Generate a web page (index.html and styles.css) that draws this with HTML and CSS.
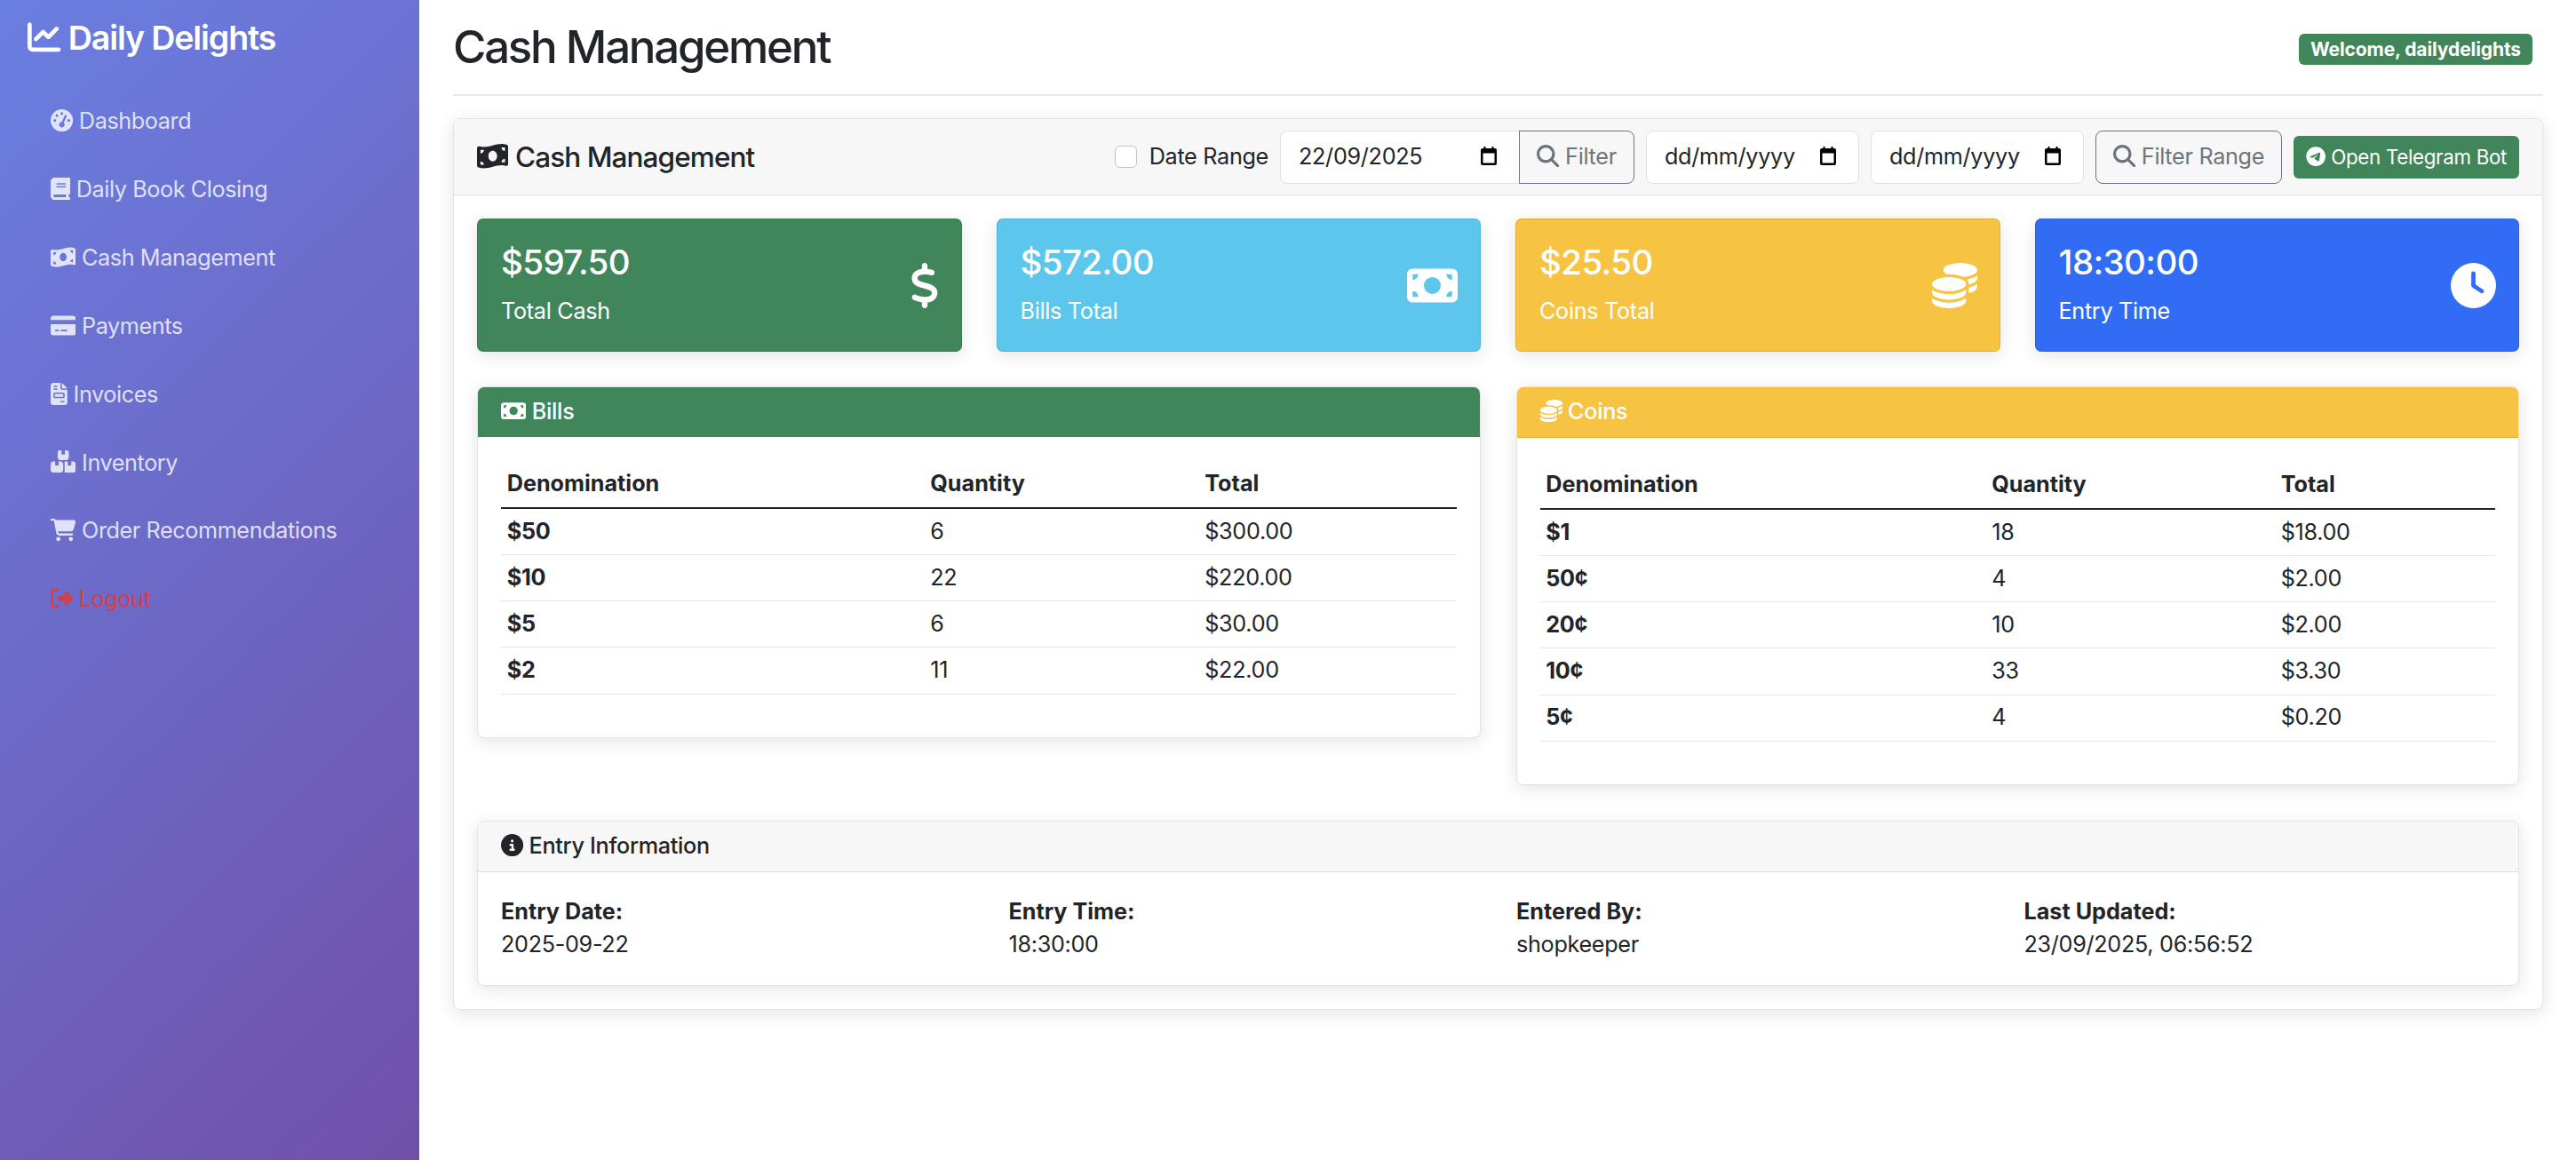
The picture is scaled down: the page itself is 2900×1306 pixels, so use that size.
FILE: index.html
```html
<!DOCTYPE html>
<html lang="en">
<head>
    <meta charset="UTF-8">
    <meta name="viewport" content="width=device-width, initial-scale=1.0">
    <title>Cash Management</title>
    <link rel="stylesheet" href="styles.css">
</head>
<body>
    <svg class="icon-defs" aria-hidden="true">
        <symbol id="i-chart" viewBox="0 0 512 512"><path d="M64 64c0-17.7-14.3-32-32-32S0 46.3 0 64V400c0 44.2 35.8 80 80 80H480c17.7 0 32-14.3 32-32s-14.3-32-32-32H80c-8.8 0-16-7.2-16-16V64zm406.6 86.6c12.5-12.5 12.5-32.8 0-45.3s-32.8-12.5-45.3 0L320 210.7l-57.4-57.4c-12.5-12.5-32.8-12.5-45.3 0l-112 112c-12.5 12.5-12.5 32.8 0 45.3s32.8 12.5 45.3 0L240 221.3l57.4 57.4c12.5 12.5 32.8 12.5 45.3 0l128-128z"/></symbol>
        <symbol id="i-gauge" viewBox="0 0 512 512"><path d="M0 256a256 256 0 1 1 512 0A256 256 0 1 1 0 256zM288 96a32 32 0 1 0 -64 0 32 32 0 1 0 64 0zM256 416c35.3 0 64-28.7 64-64c0-17.4-6.9-33.1-18.1-44.6L366 161.7c5.3-12.1-.2-26.3-12.3-31.6s-26.3 .2-31.6 12.3L257.9 288c-.6 0-1.3 0-1.9 0c-35.3 0-64 28.7-64 64s28.7 64 64 64zM176 144a32 32 0 1 0 -64 0 32 32 0 1 0 64 0zM96 288a32 32 0 1 0 0-64 32 32 0 1 0 0 64zm352-32a32 32 0 1 0 -64 0 32 32 0 1 0 64 0z"/></symbol>
        <symbol id="i-book" viewBox="0 0 448 512"><path d="M96 0C43 0 0 43 0 96V416c0 53 43 96 96 96H384h32c17.7 0 32-14.3 32-32s-14.3-32-32-32V384c17.7 0 32-14.3 32-32V32c0-17.7-14.3-32-32-32H384 96zm0 384H352v64H96c-17.7 0-32-14.3-32-32s14.3-32 32-32zm32-240c0-8.8 7.2-16 16-16H336c8.8 0 16 7.2 16 16s-7.2 16-16 16H144c-8.8 0-16-7.2-16-16zm16 48H336c8.8 0 16 7.2 16 16s-7.2 16-16 16H144c-8.8 0-16-7.2-16-16s7.2-16 16-16z"/></symbol>
        <symbol id="i-wave" viewBox="0 0 576 512"><path d="M0 112.5V422.3c0 18 10.1 35 27 41.3c87 32.5 174 10.3 261-11.9c79.8-20.3 159.6-40.7 239.3-18.9c23 6.3 48.7-9.5 48.7-33.4V89.7c0-18-10.1-35-27-41.3C462 15.9 375 38.1 288 60.3C208.2 80.6 128.4 100.9 48.7 79.1C25.6 72.8 0 88.6 0 112.5zM288 352c-44.2 0-80-43-80-96s35.8-96 80-96s80 43 80 96s-35.8 96-80 96zM64 352c35.3 0 64 28.7 64 64H64V352zm64-208c0 35.3-28.7 64-64 64V144h64zM512 304v64H448c0-35.3 28.7-64 64-64zM448 96h64v64c-35.3 0-64-28.7-64-64z"/></symbol>
        <symbol id="i-card" viewBox="0 0 576 512"><path d="M64 32C28.7 32 0 60.7 0 96v32H576V96c0-35.3-28.7-64-64-64H64zM576 224H0V416c0 35.3 28.7 64 64 64H512c35.3 0 64-28.7 64-64V224zM112 352h64c8.8 0 16 7.2 16 16s-7.2 16-16 16H112c-8.8 0-16-7.2-16-16s7.2-16 16-16zm112 16c0-8.8 7.2-16 16-16H368c8.8 0 16 7.2 16 16s-7.2 16-16 16H240c-8.8 0-16-7.2-16-16z"/></symbol>
        <symbol id="i-invoice" viewBox="0 0 384 512"><path d="M64 0C28.7 0 0 28.7 0 64V448c0 35.3 28.7 64 64 64H320c35.3 0 64-28.7 64-64V160H256c-17.7 0-32-14.3-32-32V0H64zM256 0V128H384L256 0zM80 64h64c8.8 0 16 7.2 16 16s-7.2 16-16 16H80c-8.8 0-16-7.2-16-16s7.2-16 16-16zm0 64h64c8.8 0 16 7.2 16 16s-7.2 16-16 16H80c-8.8 0-16-7.2-16-16s7.2-16 16-16zm16 96H288c17.7 0 32 14.3 32 32v64c0 17.7-14.3 32-32 32H96c-17.7 0-32-14.3-32-32V256c0-17.7 14.3-32 32-32zm0 32v64H288V256H96zM240 416h64c8.8 0 16 7.2 16 16s-7.2 16-16 16H240c-8.8 0-16-7.2-16-16s7.2-16 16-16z"/></symbol>
        <symbol id="i-boxes" viewBox="0 0 576 512"><path d="M248 0H208c-26.5 0-48 21.5-48 48V160c0 35.3 28.7 64 64 64H352c35.3 0 64-28.7 64-64V48c0-26.5-21.5-48-48-48H328V80c0 8.8-7.2 16-16 16H264c-8.8 0-16-7.2-16-16V0zM64 256c-35.3 0-64 28.7-64 64V448c0 35.3 28.7 64 64 64H224c35.3 0 64-28.7 64-64V320c0-35.3-28.7-64-64-64H184v80c0 8.8-7.2 16-16 16H120c-8.8 0-16-7.2-16-16V256H64zM352 512H512c35.3 0 64-28.7 64-64V320c0-35.3-28.7-64-64-64H472v80c0 8.8-7.2 16-16 16H408c-8.8 0-16-7.2-16-16V256H352c-15 0-28.8 5.1-39.7 13.8c4.9 10.4 7.7 22 7.7 34.2V464c0 12.2-2.8 23.8-7.7 34.2C323.2 506.9 337 512 352 512z"/></symbol>
        <symbol id="i-cart" viewBox="0 0 576 512"><path d="M0 24C0 10.7 10.7 0 24 0H69.5c22 0 41.5 12.8 50.6 32h411c26.3 0 45.5 25 38.6 50.4l-41 152.3c-8.5 31.4-37 53.3-69.5 53.3H170.7l5.4 28.5c2.2 11.3 12.1 19.5 23.6 19.5H488c13.3 0 24 10.7 24 24s-10.7 24-24 24H199.7c-34.6 0-64.3-24.6-70.7-58.5L77.4 54.5c-.7-3.8-4-6.5-7.9-6.5H24C10.7 48 0 37.3 0 24zM128 464a48 48 0 1 1 96 0 48 48 0 1 1 -96 0zm336-48a48 48 0 1 1 0 96 48 48 0 1 1 0-96z"/></symbol>
        <symbol id="i-logout" viewBox="0 0 512 512"><path d="M377.9 105.9L500.7 228.7c7.2 7.2 11.3 17.1 11.3 27.3s-4.1 20.1-11.3 27.3L377.9 406.1c-6.4 6.4-15 9.9-24 9.9c-18.7 0-33.9-15.2-33.9-33.9l0-62.1-128 0c-17.7 0-32-14.3-32-32l0-64c0-17.7 14.3-32 32-32l128 0 0-62.1c0-18.7 15.2-33.9 33.9-33.9c9 0 17.6 3.6 24 9.9zM160 96L96 96c-17.7 0-32 14.3-32 32l0 256c0 17.7 14.3 32 32 32l64 0c17.7 0 32 14.3 32 32s-14.3 32-32 32l-64 0c-53 0-96-43-96-96L0 128C0 75 43 32 96 32l64 0c17.7 0 32 14.3 32 32s-14.3 32-32 32z"/></symbol>
        <symbol id="i-search" viewBox="0 0 512 512"><path d="M416 208c0 45.9-14.9 88.3-40 122.7L502.6 457.4c12.5 12.5 12.5 32.8 0 45.3s-32.8 12.5-45.3 0L330.7 376c-34.4 25.2-76.8 40-122.7 40C93.1 416 0 322.9 0 208S93.1 0 208 0S416 93.1 416 208zM208 352a144 144 0 1 0 0-288 144 144 0 1 0 0 288z"/></symbol>
        <symbol id="i-dollar" viewBox="0 0 320 512"><path d="M160 0c17.7 0 32 14.3 32 32V67.7c1.6 .2 3.1 .4 4.7 .7c.4 .1 .7 .1 1.1 .2l48 8.8c17.4 3.2 28.9 19.9 25.7 37.2s-19.9 28.9-37.2 25.7l-47.5-8.7c-31.3-4.6-58.9-1.5-78.3 6.2s-27.2 18.3-29 28.1c-2 10.7-.5 16.7 1.2 20.4c1.8 3.9 5.5 8.3 12.8 13.2c16.3 10.7 41.3 17.7 73.7 26.3l2.9 .8c28.6 7.6 63.6 16.8 89.6 33.8c14.2 9.3 27.6 21.9 35.9 39.5c8.5 17.9 10.3 37.9 6.4 59.2c-6.9 38-33.1 63.4-65.6 76.7c-13.7 5.6-28.6 9.2-44.4 11V480c0 17.7-14.3 32-32 32s-32-14.3-32-32V445.1c-.4-.1-.9-.1-1.3-.2l-.2 0 0 0c-24.4-3.8-64.5-14.3-91.5-26.3c-16.1-7.2-23.4-26.1-16.2-42.2s26.1-23.4 42.2-16.2c20.9 9.3 55.3 18.5 75.2 21.6c31.9 4.7 58.2 2 76-5.3c16.9-6.9 24.6-16.9 26.8-28.9c1.9-10.6 .4-16.7-1.3-20.4c-1.9-4-5.6-8.4-13-13.3c-16.4-10.7-41.5-17.7-74-26.3l-2.8-.7 0 0C119.4 279.3 84.4 270 58.4 253c-14.2-9.3-27.5-22-35.8-39.6c-8.4-17.9-10.1-37.9-6.1-59.2C23.7 116 52.3 91.2 84.8 78.3c13.3-5.3 27.9-8.9 43.2-11V32c0-17.7 14.3-32 32-32z"/></symbol>
        <symbol id="i-bill" viewBox="0 0 576 512"><path d="M64 64C28.7 64 0 92.7 0 128V384c0 35.3 28.7 64 64 64H512c35.3 0 64-28.7 64-64V128c0-35.3-28.7-64-64-64H64zm64 320H64V320c35.3 0 64 28.7 64 64zM64 192V128h64c0 35.3-28.7 64-64 64zM448 384c0-35.3 28.7-64 64-64v64H448zm64-192c-35.3 0-64-28.7-64-64h64v64zM288 160a96 96 0 1 1 0 192 96 96 0 1 1 0-192z"/></symbol>
        <symbol id="i-coins" viewBox="0 0 512 512"><path d="M512 80c0 18-14.3 34.6-38.4 48c-29.1 16.1-72.5 27.5-122.3 30.9c-3.7-1.8-7.4-3.5-11.3-5C300.6 137.4 248.2 128 192 128c-8.3 0-16.4 .2-24.5 .6l-1.1-.6C142.3 114.6 128 98 128 80c0-44.2 86-80 192-80S512 35.8 512 80zM160.7 161.1c10.2-.7 20.7-1.1 31.3-1.1c62.2 0 117.4 12.3 152.5 31.4C369.3 204.9 384 221.7 384 240c0 4-.7 7.9-2.1 11.7c-4.6 13.2-17 25.3-35 35.5c0 0 0 0 0 0c-.1 .1-.3 .1-.4 .2l0 0 0 0c-.3 .2-.6 .3-.9 .5c-35 19.4-90.8 32-153.6 32c-59.6 0-112.9-11.3-148.2-29.1c-1.9-.9-3.7-1.9-5.5-2.9C14.3 274.6 0 258 0 240c0-34.8 53.4-64.5 128-75.4c10.5-1.5 21.4-2.7 32.7-3.5zM416 240c0-21.9-10.6-39.9-24.1-53.4c28.3-4.4 54.2-11.4 76.2-20.5c16.3-6.8 31.5-15.2 43.9-25.5V176c0 19.3-16.5 37.1-43.8 50.9c-14.6 7.4-32.4 13.7-52.4 18.5c.1-1.8 .2-3.5 .2-5.3zm-32 96c0 18-14.3 34.6-38.4 48c-1.8 1-3.6 1.9-5.5 2.9C304.9 404.7 251.6 416 192 416c-62.8 0-118.6-12.6-153.6-32C14.3 370.6 0 354 0 336V300.6c12.5 10.3 27.6 18.7 43.9 25.5C83.4 342.6 135.8 352 192 352s108.6-9.4 148.1-25.9c7.8-3.2 15.3-6.9 22.4-10.9c6.1-3.4 11.8-7.2 17.2-11.2c1.5-1.1 2.9-2.3 4.3-3.4V304v5.7V336zm32 0V304 278.1c19-4.2 36.5-9.5 52.1-16c16.3-6.8 31.5-15.2 43.9-25.5V272c0 10.5-5 21-14.9 30.9c-16.3 16.3-45 29.7-81.3 38.4c.1-1.7 .2-3.5 .2-5.3zM192 448c56.2 0 108.6-9.4 148.1-25.9c16.3-6.8 31.5-15.2 43.9-25.5V432c0 44.2-86 80-192 80S0 476.2 0 432V396.6c12.5 10.3 27.6 18.7 43.9 25.5C83.4 438.6 135.8 448 192 448z"/></symbol>
        <symbol id="i-clock" viewBox="0 0 512 512"><path d="M256 0a256 256 0 1 1 0 512A256 256 0 1 1 256 0zM232 120V256c0 8 4 15.5 10.7 20l96 64c11 7.4 25.9 4.4 33.3-6.7s4.4-25.9-6.7-33.3L280 243.2V120c0-13.3-10.7-24-24-24s-24 10.7-24 24z"/></symbol>
        <symbol id="i-telegram" viewBox="0 0 496 512"><path d="M248,8C111.033,8,0,119.033,0,256S111.033,504,248,504,496,392.967,496,256,384.967,8,248,8ZM362.952,176.66c-3.732,39.215-19.881,134.378-28.1,178.3-3.476,18.584-10.322,24.816-16.948,25.425-14.4,1.326-25.338-9.517-39.287-18.661-21.827-14.308-34.158-23.215-55.346-37.177-24.485-16.135-8.612-25,5.342-39.5,3.652-3.793,67.107-61.51,68.335-66.746.153-.655.3-3.1-1.154-4.384s-3.59-.849-5.135-.5q-3.283.746-104.608,69.142-14.845,10.194-26.894,9.934c-8.855-.191-25.888-5.006-38.551-9.123-15.531-5.048-27.875-7.717-26.8-16.291q.84-6.7,18.45-13.7,108.446-47.248,144.628-62.3c68.872-28.647,83.183-33.623,92.511-33.789,2.052-.034,6.639.474,9.61,2.885a10.452,10.452,0,0,1,3.53,6.716A43.765,43.765,0,0,1,362.952,176.66Z"/></symbol>
        <symbol id="i-info" viewBox="0 0 512 512"><path d="M256 512A256 256 0 1 0 256 0a256 256 0 1 0 0 512zM216 336h24V272H216c-13.3 0-24-10.7-24-24s10.7-24 24-24h48c13.3 0 24 10.7 24 24v88h8c13.3 0 24 10.7 24 24s-10.7 24-24 24H216c-13.3 0-24-10.7-24-24s10.7-24 24-24zm40-208a32 32 0 1 1 0 64 32 32 0 1 1 0-64z"/></symbol>
        <symbol id="i-calendar" viewBox="0 0 18 21"><path fill-rule="evenodd" d="M3.5 0h2v2h7V0h2v2H16a2 2 0 0 1 2 2v15a2 2 0 0 1-2 2H2a2 2 0 0 1-2-2V4a2 2 0 0 1 2-2h1.5zM2.5 7.5v11h13v-11z"/></symbol>
    </svg>

    <div class="app">
        <aside class="sidebar">
            <div class="brand"><svg class="icon"><use href="#i-chart"/></svg> Daily Delights</div>
            <nav class="side-nav">
                <a href="#"><svg class="icon"><use href="#i-gauge"/></svg> Dashboard</a>
                <a href="#"><svg class="icon w-448"><use href="#i-book"/></svg> Daily Book Closing</a>
                <a href="#"><svg class="icon w-576"><use href="#i-wave"/></svg> Cash Management</a>
                <a href="#"><svg class="icon w-576"><use href="#i-card"/></svg> Payments</a>
                <a href="#"><svg class="icon w-384"><use href="#i-invoice"/></svg> Invoices</a>
                <a href="#"><svg class="icon w-576"><use href="#i-boxes"/></svg> Inventory</a>
                <a href="#"><svg class="icon w-576"><use href="#i-cart"/></svg> Order Recommendations</a>
                <a href="#" class="logout"><svg class="icon"><use href="#i-logout"/></svg> Logout</a>
            </nav>
        </aside>

        <main class="content">
            <header class="page-header">
                <h1>Cash Management</h1>
                <span class="welcome">Welcome, dailydelights</span>
            </header>

            <section class="card main-card">
                <div class="card-header toolbar">
                    <h2><svg class="icon w-576"><use href="#i-wave"/></svg> Cash Management</h2>
                    <div class="filters">
                        <label class="range-check"><input type="checkbox"> Date Range</label>
                        <div class="input-group">
                            <div class="date-field date-single"><span>22/09/2025</span><svg class="cal"><use href="#i-calendar"/></svg></div>
                            <button class="btn-outline btn-filter"><svg class="icon"><use href="#i-search"/></svg> Filter</button>
                        </div>
                        <div class="date-field"><span>dd/mm/yyyy</span><svg class="cal"><use href="#i-calendar"/></svg></div>
                        <div class="date-field"><span>dd/mm/yyyy</span><svg class="cal"><use href="#i-calendar"/></svg></div>
                        <button class="btn-outline btn-range"><svg class="icon"><use href="#i-search"/></svg> Filter Range</button>
                        <button class="btn-telegram"><svg class="icon"><use href="#i-telegram"/></svg> Open Telegram Bot</button>
                    </div>
                </div>

                <div class="main-body">
                    <div class="stats">
                        <div class="stat bg-green">
                            <div><h3>$597.50</h3><p>Total Cash</p></div>
                            <svg class="stat-icon w-320"><use href="#i-dollar"/></svg>
                        </div>
                        <div class="stat bg-cyan">
                            <div><h3>$572.00</h3><p>Bills Total</p></div>
                            <svg class="stat-icon w-576"><use href="#i-bill"/></svg>
                        </div>
                        <div class="stat bg-yellow">
                            <div><h3>$25.50</h3><p>Coins Total</p></div>
                            <svg class="stat-icon"><use href="#i-coins"/></svg>
                        </div>
                        <div class="stat bg-blue">
                            <div><h3>18:30:00</h3><p>Entry Time</p></div>
                            <svg class="stat-icon"><use href="#i-clock"/></svg>
                        </div>
                    </div>

                    <div class="tables">
                        <div class="card">
                            <div class="card-header head-green"><svg class="icon w-576"><use href="#i-bill"/></svg> Bills</div>
                            <div class="table-wrap">
                                <table class="bills-table">
                                    <thead><tr><th>Denomination</th><th>Quantity</th><th>Total</th></tr></thead>
                                    <tbody>
                                        <tr><td>$50</td><td>6</td><td>$300.00</td></tr>
                                        <tr><td>$10</td><td>22</td><td>$220.00</td></tr>
                                        <tr><td>$5</td><td>6</td><td>$30.00</td></tr>
                                        <tr><td>$2</td><td>11</td><td>$22.00</td></tr>
                                    </tbody>
                                </table>
                            </div>
                        </div>
                        <div class="card">
                            <div class="card-header head-yellow"><svg class="icon"><use href="#i-coins"/></svg> Coins</div>
                            <div class="table-wrap">
                                <table class="coins-table">
                                    <thead><tr><th>Denomination</th><th>Quantity</th><th>Total</th></tr></thead>
                                    <tbody>
                                        <tr><td>$1</td><td>18</td><td>$18.00</td></tr>
                                        <tr><td>50¢</td><td>4</td><td>$2.00</td></tr>
                                        <tr><td>20¢</td><td>10</td><td>$2.00</td></tr>
                                        <tr><td>10¢</td><td>33</td><td>$3.30</td></tr>
                                        <tr><td>5¢</td><td>4</td><td>$0.20</td></tr>
                                    </tbody>
                                </table>
                            </div>
                        </div>
                    </div>

                    <div class="card">
                        <div class="card-header head-plain"><svg class="icon"><use href="#i-info"/></svg> Entry Information</div>
                        <div class="entry-grid">
                            <div><strong>Entry Date:</strong><span>2025-09-22</span></div>
                            <div><strong>Entry Time:</strong><span>18:30:00</span></div>
                            <div><strong>Entered By:</strong><span>shopkeeper</span></div>
                            <div><strong>Last Updated:</strong><span>23/09/2025, 06:56:52</span></div>
                        </div>
                    </div>
                </div>
            </section>
        </main>
    </div>
</body>
</html>
```

FILE: styles.css
```css
* {
    box-sizing: border-box;
}
body {
    margin: 0;
    font-family: Inter, "Liberation Sans", sans-serif;
    font-size: 25.2px;
    line-height: 1.5;
    letter-spacing: -0.3px;
    color: #212529;
    background: #fff;
}
.icon-defs {
    position: absolute;
    width: 0;
    height: 0;
}
.icon {
    width: 1em;
    height: 1em;
    fill: currentColor;
    vertical-align: -0.125em;
}
.w-320 { width: 0.625em; }
.w-384 { width: 0.75em; }
.w-448 { width: 0.875em; }
.w-576 { width: 1.125em; }

.app {
    display: flex;
    min-height: 1306px;
}

/* sidebar */
.sidebar {
    width: 472px;
    flex-shrink: 0;
    background: linear-gradient(135deg, #6a7fe1 0%, #7050a9 100%);
    color: #fff;
}
.brand {
    padding: 16px 31px;
    font-size: 37.5px;
    line-height: 54px;
    font-weight: 600;
    letter-spacing: -1.1px;
}
.side-nav {
    margin-top: 12.5px;
    display: flex;
    flex-direction: column;
    letter-spacing: -0.4px;
}
.side-nav a {
    padding: 19.55px 57px;
    color: rgba(255, 255, 255, 0.8);
    text-decoration: none;
}
.side-nav a.logout {
    color: #d43f4c;
}

/* content */
.content {
    flex: 1;
    min-width: 0;
    padding: 0 37px 0 38px;
}
.page-header {
    height: 108px;
    display: flex;
    align-items: center;
    justify-content: space-between;
    border-bottom: 2px solid #e9e9ea;
    padding-right: 12px;
    margin-bottom: 25px;
}
.page-header h1 {
    margin: 0;
    font-size: 51px;
    font-weight: 500;
    line-height: 1.2;
    letter-spacing: -2.25px;
}
.welcome {
    background: #41865a;
    color: #fff;
    font-size: 21px;
    font-weight: 700;
    line-height: 1;
    margin-top: 4px;
    padding: 7px 13px;
    height: 35px;
    border-radius: 6px;
    letter-spacing: -0.1px;
}

.card {
    background: #fff;
    border: 1.5px solid #e3e3e4;
    border-radius: 8px;
    box-shadow: 0 4px 20px rgba(0, 0, 0, 0.11);
    overflow: hidden;
}
.main-card {
    overflow: visible;
}
.card-header {
    padding: 9px 26px;
    border-bottom: 1.5px solid #dedede;
    background: #f7f7f7;
    font-weight: 500;
}
.head-green {
    background: #41865a;
    color: #fff;
    border-bottom: 0;
}
.head-yellow {
    background: #f6c343;
    color: #fff;
    border-bottom-color: #e2b13a;
}
.head-plain {
    font-weight: 500;
}

/* toolbar */
.toolbar {
    display: flex;
    align-items: center;
    justify-content: space-between;
    height: 86px;
    padding: 0 26px;
    border-radius: 8px 8px 0 0;
}
.toolbar h2 {
    margin: 0;
    font-size: 31.5px;
    font-weight: 500;
    line-height: 1.2;
    letter-spacing: -0.9px;
}
.filters {
    display: flex;
    align-items: center;
    gap: 13px;
    font-weight: 400;
}
.range-check {
    display: flex;
    align-items: center;
    gap: 14px;
}
.range-check input {
    appearance: none;
    width: 25px;
    height: 25px;
    margin: 0;
    background: #fff;
    border: 1.5px solid #bfc3c8;
    border-radius: 6px;
}
.input-group {
    display: flex;
}
.date-field {
    width: 240px;
    height: 60px;
    padding: 0 25px 0 20px;
    display: flex;
    align-items: center;
    justify-content: space-between;
    background: #fff;
    border: 1.5px solid #dee2e6;
    border-radius: 8px;
}
.date-single {
    width: 269px;
    border-right: 0;
    border-radius: 8px 0 0 8px;
}
.cal {
    width: 18px;
    height: 21px;
    margin-top: -3px;
    fill: #000;
}
.btn-outline {
    height: 60px;
    padding: 0 19px;
    font: inherit;
    letter-spacing: inherit;
    color: #6c757d;
    background: transparent;
    border: 1.5px solid #6c757d;
    border-radius: 8px;
    white-space: nowrap;
}
.btn-filter {
    width: 130px;
    padding: 0;
    border-radius: 0 8px 8px 0;
}
.btn-range {
    width: 210px;
    padding: 0;
}
.btn-telegram {
    width: 254px;
    height: 48px;
    padding: 0;
    font-family: inherit;
    font-size: 22.3px;
    line-height: 1.5;
    font-weight: 400;
    letter-spacing: -0.3px;
    color: #fff;
    background: #41865a;
    border: 0;
    border-radius: 6px;
    white-space: nowrap;
}

/* stat cards */
.main-body {
    padding: 26px;
}
.stats {
    display: grid;
    grid-template-columns: repeat(4, 1fr);
    gap: 39px;
    margin-bottom: 39px;
}
.stat {
    height: 150px;
    padding: 26px 25px 26px 26px;
    display: flex;
    align-items: center;
    justify-content: space-between;
    color: #fff;
    border-radius: 7px;
    border: 1px solid rgba(0, 0, 0, 0.1);
    box-shadow: 0 4px 20px rgba(0, 0, 0, 0.11);
}
.stat h3 {
    margin: 0 0 14px;
    font-size: 38.5px;
    font-weight: 500;
    line-height: 1.2;
    letter-spacing: -0.6px;
}
.stat p {
    margin: 0;
}
.stat-icon {
    width: 51px;
    height: 51px;
    fill: currentColor;
}
.stat-icon.w-320 { width: 32px; }
.stat-icon.w-576 { width: 57px; }
.bg-green { background: #41865a; }
.bg-cyan { background: #5cc6ec; }
.bg-yellow { background: #f6c343; }
.bg-blue { background: #316cf4; }

/* tables */
.tables {
    display: grid;
    grid-template-columns: 1fr 1fr;
    gap: 40px;
    align-items: start;
    margin-bottom: 40px;
}
.table-wrap {
    padding: 28px 26px 26px;
}
table {
    width: 100%;
    border-collapse: collapse;
    margin-bottom: 22px;
}
th, td {
    padding: 6.7px;
    text-align: left;
    border-bottom: 1.5px solid #e3e4e5;
}
th {
    font-weight: 700;
    letter-spacing: 0;
    border-bottom: 2.5px solid #212529;
}
td:first-child {
    font-weight: 700;
}

/* entry info */
.entry-grid {
    display: grid;
    grid-template-columns: repeat(4, 1fr);
    gap: 41px;
    padding: 26px;
}
.entry-grid strong {
    display: block;
    font-weight: 700;
    letter-spacing: 0;
}
.entry-grid span {
    display: block;
}
```
